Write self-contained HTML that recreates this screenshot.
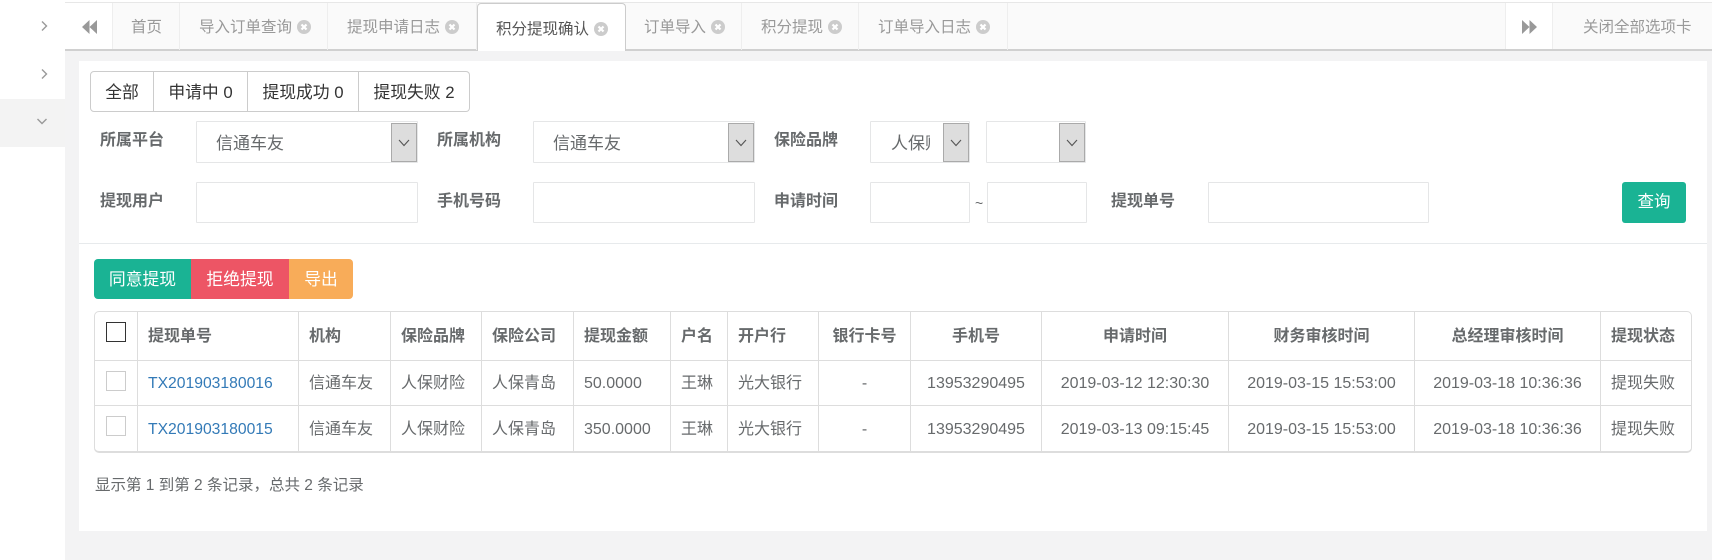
<!DOCTYPE html>
<html lang="zh">
<head>
<meta charset="utf-8">
<title>积分提现确认</title>
<style>
html,body{margin:0;padding:0;width:1712px;height:560px;overflow:hidden;background:#f3f3f4}
body{position:relative;font-family:"Liberation Sans","Noto Sans CJK SC",sans-serif;font-size:16px;color:#676a6c}
.a{position:absolute;box-sizing:border-box}
.t{position:absolute;white-space:nowrap;line-height:22px;height:22px;font-size:15.500px}
.tabtxt{color:#999}
.tab{position:absolute;top:3px;height:47px;border-right:1px solid #eee;box-sizing:border-box}
.lb{position:absolute;white-space:nowrap;line-height:22px;font-weight:700;color:#676a6c}
.inp{position:absolute;box-sizing:border-box;border:1px solid #e5e6e7;border-radius:1px;background:#fff}
.arr{position:absolute;top:1px;right:0;bottom:0;width:26px;box-sizing:border-box;background:#ddd;border:1px solid #aaa}
.arr svg{position:absolute;left:6px;top:13px}
.sv{position:absolute;font-size:17px;line-height:24px;white-space:nowrap;color:#676a6c;overflow:hidden}
.seg{position:absolute;top:71px;height:41px;line-height:41px;box-sizing:border-box;color:#333;text-align:center;border:1px solid #ccc;border-left:0;background:#fff;font-size:16.800px}
.btn{position:absolute;top:259px;height:40px;line-height:41px;color:#fff;text-align:center;font-size:16.800px}
table{position:absolute;left:94px;top:311px;width:1598px;border-collapse:separate;border-spacing:0;table-layout:fixed;border:1px solid #ddd;border-bottom-width:2px;border-radius:5px;background:#fff;box-sizing:border-box;height:142px}
th,td{box-sizing:border-box;padding:1px 0 0 10px;border-left:1px solid #ddd;border-top:1px solid #ddd;white-space:nowrap;overflow:hidden;line-height:22px;vertical-align:middle;text-align:left}
th{border-top:0;height:48px;font-weight:700;padding-top:2px}
td{height:45px}
tbody tr+tr td{height:46px;padding-top:2px}
th:first-child,td:first-child{border-left:0}
.c{text-align:center;padding-left:0}
a{color:#337ab7;text-decoration:none;font-size:15.700px}
.cb{display:block;width:20px;height:20px;box-sizing:border-box;border:1px solid #ccc;position:absolute;left:11px}
</style>
</head>
<body>
<!-- sidebar -->
<div class="a" style="left:0;top:0;width:65px;height:560px;background:#fff"></div>
<div class="a" style="left:0;top:99px;width:65px;height:48px;background:#f3f3f3"></div>
<svg class="a" style="left:40px;top:20px" width="8" height="12" viewBox="0 0 8 12"><path d="M2 1.500L6.500 6L2 10.500" fill="none" stroke="#999" stroke-width="1.400"/></svg>
<svg class="a" style="left:40px;top:68px" width="8" height="12" viewBox="0 0 8 12"><path d="M2 1.500L6.500 6L2 10.500" fill="none" stroke="#999" stroke-width="1.400"/></svg>
<svg class="a" style="left:36px;top:117px" width="12" height="8" viewBox="0 0 12 8"><path d="M1.500 2L6 6.500L10.500 2" fill="none" stroke="#999" stroke-width="1.400"/></svg>

<!-- tab bar -->
<div class="a" style="left:65px;top:0;width:1647px;height:3px;background:#fff;border-bottom:1px solid #e7e7e7"></div>
<div class="a" style="left:65px;top:3px;width:1647px;height:48px;background:#fafafa;border-bottom:2px solid #d0d0d0"></div>
<div class="a" style="left:65px;top:3px;width:48px;height:46px;background:#fff;border-right:1px solid #eee"></div>
<svg class="a" style="left:82px;top:20px" width="15" height="14" viewBox="0 0 15 14"><path d="M7.500 0V14L0 7ZM15 0V14L7.500 7Z" fill="#999"/></svg>

<div class="tab" style="left:113px;width:67px"></div>
<div class="t tabtxt" style="left:131px;top:17px">首页</div>
<div class="tab" style="left:180px;width:148px"></div>
<div class="t tabtxt" style="left:199px;top:17px">导入订单查询</div>
<svg class="a" style="left:297px;top:20px" width="14" height="14" viewBox="0 0 14 14"><circle cx="7" cy="7" r="7" fill="#ccc"/><path d="M4.500 4.500L9.500 9.500M9.500 4.500L4.500 9.500" stroke="#fff" stroke-width="2.200"/></svg>
<div class="tab" style="left:328px;width:149px"></div>
<div class="t tabtxt" style="left:347px;top:17px">提现申请日志</div>
<svg class="a" style="left:445px;top:20px" width="14" height="14" viewBox="0 0 14 14"><circle cx="7" cy="7" r="7" fill="#ccc"/><path d="M4.500 4.500L9.500 9.500M9.500 4.500L4.500 9.500" stroke="#fff" stroke-width="2.200"/></svg>

<div class="a" style="left:477px;top:3px;width:149px;height:48px;background:#fff;border:1px solid #ccc;border-bottom:0;border-radius:4px 4px 0 0"></div>
<div class="t" style="left:496px;top:18.500px;color:#555">积分提现确认</div>
<svg class="a" style="left:594px;top:22px" width="14" height="14" viewBox="0 0 14 14"><circle cx="7" cy="7" r="7" fill="#ccc"/><path d="M4.500 4.500L9.500 9.500M9.500 4.500L4.500 9.500" stroke="#fff" stroke-width="2.200"/></svg>

<div class="tab" style="left:626px;width:116px"></div>
<div class="t tabtxt" style="left:644px;top:17px">订单导入</div>
<svg class="a" style="left:711px;top:20px" width="14" height="14" viewBox="0 0 14 14"><circle cx="7" cy="7" r="7" fill="#ccc"/><path d="M4.500 4.500L9.500 9.500M9.500 4.500L4.500 9.500" stroke="#fff" stroke-width="2.200"/></svg>
<div class="tab" style="left:742px;width:117px"></div>
<div class="t tabtxt" style="left:761px;top:17px">积分提现</div>
<svg class="a" style="left:828px;top:20px" width="14" height="14" viewBox="0 0 14 14"><circle cx="7" cy="7" r="7" fill="#ccc"/><path d="M4.500 4.500L9.500 9.500M9.500 4.500L4.500 9.500" stroke="#fff" stroke-width="2.200"/></svg>
<div class="tab" style="left:859px;width:149px"></div>
<div class="t tabtxt" style="left:878px;top:17px">订单导入日志</div>
<svg class="a" style="left:976px;top:20px" width="14" height="14" viewBox="0 0 14 14"><circle cx="7" cy="7" r="7" fill="#ccc"/><path d="M4.500 4.500L9.500 9.500M9.500 4.500L4.500 9.500" stroke="#fff" stroke-width="2.200"/></svg>

<div class="a" style="left:1505px;top:3px;width:48px;height:46px;background:#fff;border-left:1px solid #eee;border-right:1px solid #eee"></div>
<svg class="a" style="left:1522px;top:20px" width="15" height="14" viewBox="0 0 15 14"><path d="M0 0V14L7.500 7ZM7.500 0V14L15 7Z" fill="#999"/></svg>
<div class="t tabtxt" style="left:1583px;top:17px">关闭全部选项卡</div>

<!-- panel -->
<div class="a" style="left:79px;top:61px;width:1628px;height:470px;background:#fff"></div>

<!-- status segments -->
<div class="seg" style="left:90px;width:64px;border-left:1px solid #ccc;border-radius:4px 0 0 4px">全部</div>
<div class="seg" style="left:154px;width:94px">申请中 0</div>
<div class="seg" style="left:248px;width:111px">提现成功 0</div>
<div class="seg" style="left:359px;width:111px;border-radius:0 4px 4px 0">提现失败 2</div>

<!-- filter row 1 -->
<div class="lb" style="left:100px;top:130px">所属平台</div>
<div class="inp" style="left:196px;top:121px;width:222px;height:42px"><div class="arr"><svg width="12" height="12" viewBox="0 0 12 12"><path d="M1 3L6 8.500L11 3" fill="none" stroke="#555" stroke-width="1.100"/></svg></div></div>
<div class="sv" style="left:216px;top:132px">信通车友</div>

<div class="lb" style="left:437px;top:130px">所属机构</div>
<div class="inp" style="left:533px;top:121px;width:222px;height:42px"><div class="arr"><svg width="12" height="12" viewBox="0 0 12 12"><path d="M1 3L6 8.500L11 3" fill="none" stroke="#555" stroke-width="1.100"/></svg></div></div>
<div class="sv" style="left:553px;top:132px">信通车友</div>

<div class="lb" style="left:774px;top:130px">保险品牌</div>
<div class="inp" style="left:870px;top:121px;width:100px;height:42px"><div class="arr"><svg width="12" height="12" viewBox="0 0 12 12"><path d="M1 3L6 8.500L11 3" fill="none" stroke="#555" stroke-width="1.100"/></svg></div></div>
<div class="sv" style="left:891px;top:132px;width:39px">人保财险</div>

<div class="inp" style="left:986px;top:121px;width:100px;height:42px"><div class="arr"><svg width="12" height="12" viewBox="0 0 12 12"><path d="M1 3L6 8.500L11 3" fill="none" stroke="#555" stroke-width="1.100"/></svg></div></div>

<!-- filter row 2 -->
<div class="lb" style="left:100px;top:191px">提现用户</div>
<div class="inp" style="left:196px;top:182px;width:222px;height:41px"></div>
<div class="lb" style="left:437px;top:191px">手机号码</div>
<div class="inp" style="left:533px;top:182px;width:222px;height:41px"></div>
<div class="lb" style="left:774px;top:191px">申请时间</div>
<div class="inp" style="left:870px;top:182px;width:100px;height:41px"></div>
<div class="t" style="left:975px;top:192px;font-size:14px">~</div>
<div class="inp" style="left:987px;top:182px;width:100px;height:41px"></div>
<div class="lb" style="left:1111px;top:191px">提现单号</div>
<div class="inp" style="left:1208px;top:182px;width:221px;height:41px"></div>
<div class="a" style="left:1622px;top:182px;width:64px;height:41px;line-height:41px;background:#1ab394;color:#fff;text-align:center;border-radius:3px;font-size:16.500px">查询</div>

<div class="a" style="left:79px;top:243px;width:1628px;height:1px;background:#e7eaec"></div>

<!-- action buttons -->
<div class="btn" style="left:94px;width:97px;background:#1ab394;border-radius:4px 0 0 4px">同意提现</div>
<div class="btn" style="left:191px;width:98px;background:#ed5565">拒绝提现</div>
<div class="btn" style="left:289px;width:64px;background:#f8ac59;border-radius:0 4px 4px 0">导出</div>

<!-- data table -->
<table>
<colgroup>
<col style="width:42px"><col style="width:161px"><col style="width:92px"><col style="width:91px"><col style="width:92px"><col style="width:97px"><col style="width:57px"><col style="width:91px"><col style="width:92px"><col style="width:131px"><col style="width:187px"><col style="width:186px"><col style="width:186px"><col>
</colgroup>
<thead>
<tr>
<th style="position:relative"><span class="cb" style="border-color:#333;top:10px"></span></th>
<th>提现单号</th><th>机构</th><th>保险品牌</th><th>保险公司</th><th>提现金额</th><th>户名</th><th>开户行</th>
<th class="c">银行卡号</th><th class="c">手机号</th><th class="c">申请时间</th><th class="c">财务审核时间</th><th class="c">总经理审核时间</th><th>提现状态</th>
</tr>
</thead>
<tbody>
<tr>
<td style="position:relative"><span class="cb" style="top:10px"></span></td>
<td><a href="#">TX201903180016</a></td><td>信通车友</td><td>人保财险</td><td>人保青岛</td><td>50.0000</td><td>王琳</td><td>光大银行</td>
<td class="c">-</td><td class="c">13953290495</td><td class="c">2019-03-12 12:30:30</td><td class="c">2019-03-15 15:53:00</td><td class="c">2019-03-18 10:36:36</td><td>提现失败</td>
</tr>
<tr>
<td style="position:relative"><span class="cb" style="top:10px"></span></td>
<td><a href="#">TX201903180015</a></td><td>信通车友</td><td>人保财险</td><td>人保青岛</td><td>350.0000</td><td>王琳</td><td>光大银行</td>
<td class="c">-</td><td class="c">13953290495</td><td class="c">2019-03-13 09:15:45</td><td class="c">2019-03-15 15:53:00</td><td class="c">2019-03-18 10:36:36</td><td>提现失败</td>
</tr>
</tbody>
</table>

<div class="t" style="left:95px;top:475px">显示第 1 到第 2 条记录，总共 2 条记录</div>
</body>
</html>
